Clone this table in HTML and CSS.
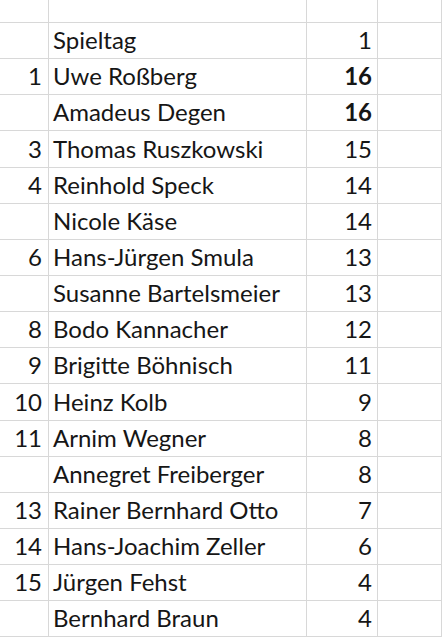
FILE: index.html
```html
<!DOCTYPE html>
<html>
<head>
<meta charset="UTF-8">
<title>Spieltag 1</title>
<link rel="stylesheet" href="styles.css">
</head>
<body>

<div class="sheet">
	<div class="cell nr"></div><div class="cell name"></div><div class="cell pts"></div><div class="cell rest"></div>

	<div class="cell nr"></div><div class="cell name">Spieltag</div><div class="cell pts">1</div><div class="cell rest"></div>
	<div class="cell nr">1</div><div class="cell name">Uwe Roßberg</div><div class="cell pts best">16</div><div class="cell rest"></div>
	<div class="cell nr"></div><div class="cell name">Amadeus Degen</div><div class="cell pts best">16</div><div class="cell rest"></div>
	<div class="cell nr">3</div><div class="cell name">Thomas Ruszkowski</div><div class="cell pts">15</div><div class="cell rest"></div>
	<div class="cell nr">4</div><div class="cell name">Reinhold Speck</div><div class="cell pts">14</div><div class="cell rest"></div>
	<div class="cell nr"></div><div class="cell name">Nicole Käse</div><div class="cell pts">14</div><div class="cell rest"></div>
	<div class="cell nr">6</div><div class="cell name">Hans-Jürgen Smula</div><div class="cell pts">13</div><div class="cell rest"></div>
	<div class="cell nr"></div><div class="cell name">Susanne Bartelsmeier</div><div class="cell pts">13</div><div class="cell rest"></div>
	<div class="cell nr">8</div><div class="cell name">Bodo Kannacher</div><div class="cell pts">12</div><div class="cell rest"></div>
	<div class="cell nr">9</div><div class="cell name">Brigitte Böhnisch</div><div class="cell pts">11</div><div class="cell rest"></div>
	<div class="cell nr">10</div><div class="cell name">Heinz Kolb</div><div class="cell pts">9</div><div class="cell rest"></div>
	<div class="cell nr">11</div><div class="cell name">Arnim Wegner</div><div class="cell pts">8</div><div class="cell rest"></div>
	<div class="cell nr"></div><div class="cell name">Annegret Freiberger</div><div class="cell pts">8</div><div class="cell rest"></div>
	<div class="cell nr">13</div><div class="cell name">Rainer Bernhard Otto</div><div class="cell pts">7</div><div class="cell rest"></div>
	<div class="cell nr">14</div><div class="cell name">Hans-Joachim Zeller</div><div class="cell pts">6</div><div class="cell rest"></div>
	<div class="cell nr">15</div><div class="cell name">Jürgen Fehst</div><div class="cell pts">4</div><div class="cell rest"></div>
	<div class="cell nr"></div><div class="cell name">Bernhard Braun</div><div class="cell pts">4</div><div class="cell rest"></div>
</div>

</body>
</html>
```

FILE: styles.css
```css
html, body {margin: 0; height: 640px; overflow: hidden; background: #ffffff;}
.sheet {display: grid; grid-template-columns: 49px 258px 71px 1fr; grid-template-rows: 23px; grid-auto-rows: 36.15px; font-family: Lato, "Liberation Sans", sans-serif; font-size: 24px; color: #161616;}
.cell {box-sizing: border-box; border-right: 1px solid #d8d8d8; border-bottom: 1px solid #d8d8d8; display: flex; align-items: flex-end; padding: 0 5px 6px 4px; line-height: 24px; white-space: nowrap; overflow: hidden;}
.nr {justify-content: flex-end; padding-right: 6px;}
.pts {justify-content: flex-end; padding-right: 5px;}
.best {font-weight: bold;}
```
